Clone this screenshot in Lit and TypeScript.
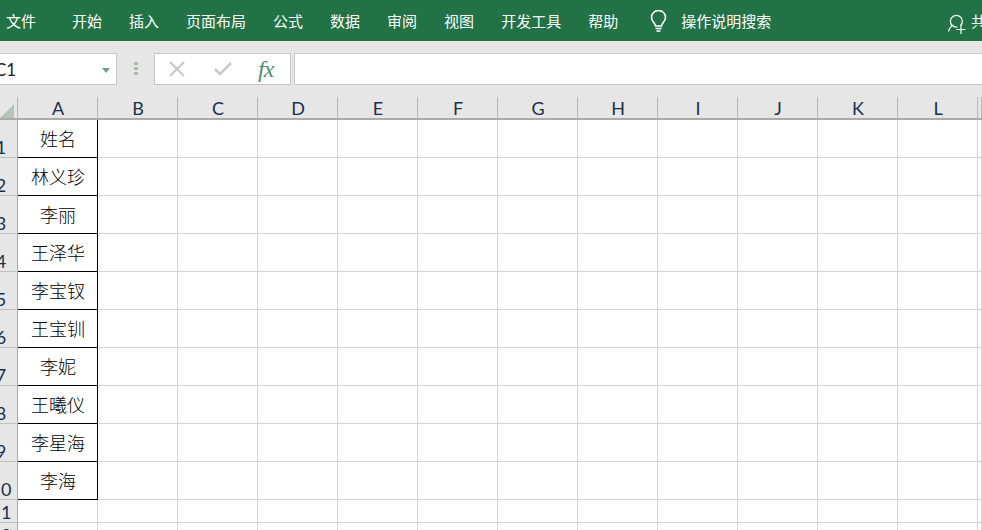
import { LitElement, html, css } from "lit";
import { customElement } from "lit/decorators.js";

const TABS = ["开始", "插入", "页面布局", "公式", "数据", "审阅", "视图", "开发工具", "帮助"];
const COLS = "ABCDEFGHIJKL".split("");
const NAMES = ["姓名", "林义珍", "李丽", "王泽华", "李宝钗", "王宝钏", "李妮", "王曦仪", "李星海", "李海"];

@customElement("app-root")
export class AppRoot extends LitElement {
  static styles = css`
    :host { display: block; width: 982px; height: 530px; overflow: hidden; background: #fff;
      font-family: "Noto Sans CJK SC", sans-serif; }
    .top { height: 41px; background: #217346; color: #fff; display: flex; align-items: center;
      font-size: 15px; padding: 0 0 0 6px; box-sizing: border-box; line-height: 41px; }
    .file { margin-right: 36px; }
    .tab { margin-right: 27px; }
    .lamp { margin: 3px 0 0 5px; width: 17px; height: 24px; flex: none; }
    .search { margin-left: 14px; font-size: 15px; flex: 1; }
    .person { width: 18px; height: 20px; flex: none; margin-top: 7px; }
    .share { margin-left: 5px; width: 11px; overflow: hidden; white-space: nowrap; }

    .fbar { height: 56px; background: #e6e6e6; display: flex; align-items: flex-start; padding-top: 12px;
      box-sizing: border-box; }
    .box { height: 32px; box-sizing: border-box; background: #fff; border: 1px solid #c6c6c6; flex: none; }
    .name { width: 128px; margin-left: -11px; display: flex; align-items: center; justify-content: space-between;
      padding: 0 6px 0 5px; font: 17px Lato, "Open Sans", sans-serif; color: #222; }
    .caret { width: 0; height: 0; border: 4px solid transparent; border-top: 5px solid #6f9e86; border-bottom: 0; margin-top: 2px; }
    .dots { width: 37px; flex: none; display: flex; flex-direction: column; align-items: center; gap: 2px;
      padding: 9px 0 0 1px; box-sizing: border-box; }
    .dots i { width: 4px; height: 3px; background: #a9bdb1; display: block; }
    .btns { width: 137px; display: flex; align-items: center; margin-right: 3px; }
    .btns svg { display: block; flex: none; }
    .x { margin-left: 14px; }
    .check { margin-left: 29px; }
    .fx { font: italic 400 24px/1 "Liberation Serif", serif; color: #4f8f6e; margin-left: 26px; letter-spacing: -1px; }
    .input { flex: 1; border-right: 0; }

    .grid { display: grid; grid-template-columns: 18px repeat(12, 80px) 4px;
      grid-template-rows: 23px repeat(10, 38px) 23px 23px; }
    .corner, .ch { background: #e6e6e6; border-bottom: 2px solid #ababab; box-sizing: border-box; position: relative; }
    .corner svg { position: absolute; left: 0; top: 5px; }
    .ch { display: flex; align-items: center; justify-content: center; color: #1a2f4a;
      font: 18px Lato, "Open Sans", sans-serif; }
    .ch::after, .corner::after { content: ""; position: absolute; right: 0; top: 0; bottom: 0; width: 1px; background: #b8b8b8; }
    .rh { background: #e6e6e6; box-sizing: border-box; border-right: 1px solid #ababab; border-bottom: 1px solid #c0c0c0;
      overflow: hidden; display: flex; align-items: flex-end; justify-content: flex-start;
      font: 18px/20px Lato, "Open Sans", sans-serif; color: #1a2f4a; }
    .rh span { flex: none; width: 36px; margin-left: -17px; text-align: center; }
    .c { box-sizing: border-box; border-right: 1px solid #d4d4d4; border-bottom: 1px solid #d4d4d4; }
    .a { border-color: #000; display: flex; align-items: center; justify-content: center; font-size: 18px;
      font-weight: 300; color: #000; padding: 0 0 2px 1px; }
  `;

  render() {
    const rows = Array.from({ length: 12 }, (_, i) => i);
    return html`
      <div class="top">
        <span class="file">文件</span>
        ${TABS.map((t) => html`<span class="tab">${t}</span>`)}
        <svg class="lamp" viewBox="0 0 17 24" fill="none" stroke="#fff" stroke-width="1.6">
          <path d="M5.5 16c0-3-4-4.500-4-8.500a7 7 0 0 1 14 0c0 4-4 5.500-4 8.500z" />
          <path d="M5.500 18.500h6M6.500 21h4" />
        </svg>
        <span class="search">操作说明搜索</span>
        <svg class="person" viewBox="0 0 18 20" fill="none" stroke="#fff" stroke-width="1.2">
          <path d="M9.500 13a6 5.800 0 1 1 3-1.500" />
          <path d="M.6 17.500c.6-3 2.600-5.500 5-6.500M8 15.500h9.500M13 11v9" />
        </svg>
        <span class="share">共享</span>
      </div>
      <div class="fbar">
        <div class="box name"><span>C1</span><span class="caret"></span></div>
        <div class="dots"><i></i><i></i><i></i></div>
        <div class="box btns">
          <svg class="x" width="16" height="16" viewBox="0 0 16 16" stroke="#c9c9c9" stroke-width="2.200" fill="none"><path d="M1 1l14 14M15 1L1 15"/></svg>
          <svg class="check" width="18" height="14" viewBox="0 0 18 14" stroke="#c9c9c9" stroke-width="2.600" fill="none"><path d="M1 7l5 5L17 1"/></svg>
          <span class="fx">fx</span>
        </div>
        <div class="box input"></div>
      </div>
      <div class="grid">
        <div class="corner">
          <svg width="16" height="17" viewBox="0 0 16 17"><path d="M0 16h14V2z" fill="#b4c4b8"/></svg>
        </div>
        ${COLS.map((c) => html`<div class="ch">${c}</div>`)}
        <div class="ch"></div>
        ${rows.map(
          (r) => html`
            <div class="rh"><span>${r + 1}</span></div>
            ${COLS.map((_, ci) =>
              ci === 0 && r < 10
                ? html`<div class="c a">${NAMES[r]}</div>`
                : html`<div class="c"></div>`
            )}
            <div class="c"></div>
          `
        )}
      </div>
    `;
  }
}
